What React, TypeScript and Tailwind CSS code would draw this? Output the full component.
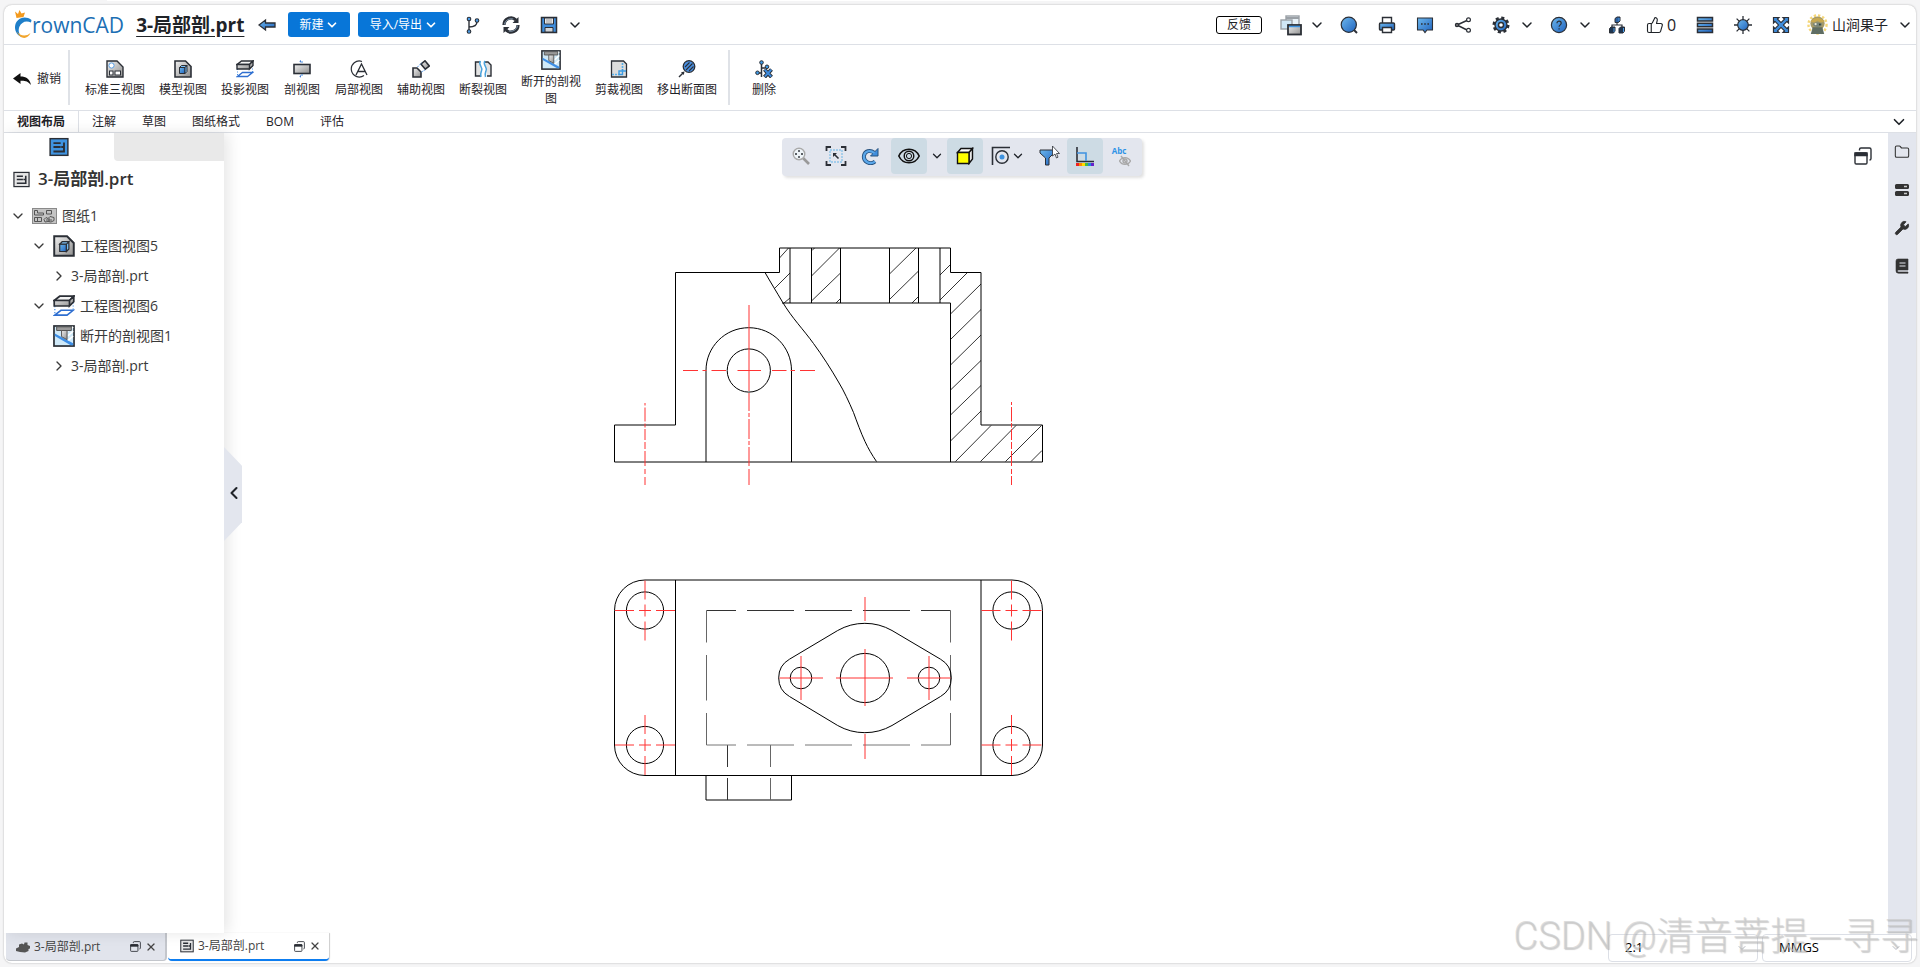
import React from "react";
import { ChevronDown, ChevronLeft, ChevronRight, X, ThumbsUp, Folder, Wrench } from "lucide-react";

const INK = "#2b2f36";
const BLUE = "url(#blueFill)";
const GREY = "url(#greyFill)";

function Icon({ children, className = "size-[18px]", box = 18 }: { children: React.ReactNode; className?: string; box?: number }) {
  return (
    <svg viewBox={`0 0 ${box} ${box}`} className={`${className} shrink-0`} fill="none" stroke={INK} strokeWidth="1.4" aria-hidden="true">
      {children}
    </svg>
  );
}

function Gradients() {
  return (
    <svg className="absolute size-0" aria-hidden="true">
      <defs>
        <linearGradient id="blueFill" x1="0" y1="0" x2="1" y2="1">
          <stop offset="0" stopColor="#6db8ee" />
          <stop offset="1" stopColor="#1f62bd" />
        </linearGradient>
        <linearGradient id="greyFill" x1="0" y1="0" x2="1" y2="1">
          <stop offset="0" stopColor="#f0f0f0" />
          <stop offset="1" stopColor="#8f8f8f" />
        </linearGradient>
      </defs>
    </svg>
  );
}

/* ---------- icons ---------- */

const StandardViewsIcon = () => (
  <Icon>
    <path d="M1 1h10l6 6v10H1z" fill={GREY} />
    <circle cx="5.5" cy="5.5" r="2.6" fill="#fff" stroke="#5aa0e6" strokeWidth="1" />
    <rect x="3.5" y="11" width="3.5" height="4" fill="#fff" strokeWidth="1" />
    <rect x="9" y="11" width="5.5" height="4" fill="#fff" strokeWidth="1" />
  </Icon>
);
const ModelViewIcon = ({ className }: { className?: string }) => (
  <Icon className={className}>
    <path d="M1 1h10.5L17 6.500V17H1z" fill={GREY} strokeWidth="1.6" />
    <path d="M5.500 7.500h5.500v6H5.500z" fill={BLUE} strokeWidth="1" />
    <path d="M5.500 7.500 7.500 5.500h5.500l-2 2zM11 13.500l2-2v-6l-2 2z" fill="#7cc0f5" strokeWidth="1" />
  </Icon>
);
const ProjectionIcon = ({ className }: { className?: string }) => (
  <Icon className={className}>
    <path d="M1.500 16.500h10l5-4h-10z" fill="#fff" stroke="#2f6fd0" strokeWidth="1.300" />
    <path d="M1.500 9v6M16.500 6v6" stroke="#4a90e2" strokeWidth="1" strokeDasharray="1 1.500" />
    <path d="M1 4.500 5.500 1H17l-3.500 3.500z" fill="#f4f4f4" strokeWidth="1.400" />
    <path d="M1 4.500h12.500V9H1zM13.500 4.500 17 1v4.500L13.500 9z" fill={GREY} strokeWidth="1.400" />
  </Icon>
);
const SectionIcon = () => (
  <Icon>
    <rect x="1" y="4.500" width="16" height="9" fill={GREY} strokeWidth="1.600" />
    <path d="M9 1v3M9 14v3" stroke="#4a90e2" strokeWidth="1" strokeDasharray="2 1" />
    <path d="M7 1.500h-1l2-1.500v3zM7 16.500h-1l2-1.500v3z" fill="#2f6fd0" stroke="none" />
  </Icon>
);
const DetailIcon = () => (
  <Icon>
    <path d="M12 1.500A8 8 0 1 0 14 15.500" strokeWidth="1.200" />
    <path d="M6 15 11.500 4 17 15M8 11.500h7" strokeWidth="1.300" />
  </Icon>
);
const AuxiliaryIcon = () => (
  <Icon>
    <path d="M1 8h4l4 4v5H1z" fill={GREY} strokeWidth="1.600" />
    <path d="m9 4 4-3.200L17.300 6l-4 3.200z" fill={GREY} strokeWidth="1.600" />
    <path d="m5.500 7 4-4M9.500 12l4-2.500" stroke="#4a90e2" strokeWidth="1" strokeDasharray="1.500 1" />
  </Icon>
);
const BrokenIcon = () => (
  <Icon>
    <path d="M6 2H1.500v14H7M11 2h3l3 3v11h-4" fill="#e3e3e3" />
    <path d="M6.500 1c-3 4 3 6 1 10-.8 2-1.500 3-.5 6M11 1c-3 4 3 6 1 10-.8 2-1.500 3-.5 6" stroke="#4ba3dc" strokeWidth="1.500" />
  </Icon>
);
const BreakoutIcon = ({ className }: { className?: string }) => (
  <Icon className={className}>
    <rect x=".8" y=".8" width="16.400" height="16.400" fill="#cfe9f8" strokeWidth="1.400" />
    <path d="M12 5l4.500-3.500M12 9l4.500-4M12 13l4.500-4" stroke="#fff" strokeWidth="1.200" />
    <path d="M1.500 7 16.500 15v1.500h-2L1.500 9z" fill="#3d8ee6" stroke="none" />
    <path d="M3 1.500h12v3H3z" fill="#9a9a9a" stroke="#555" strokeWidth=".8" />
    <path d="M7 4.500h4.500v7.500L7 9.500z" fill={GREY} stroke="#555" strokeWidth=".8" />
  </Icon>
);
const CropIcon = () => (
  <Icon>
    <path d="M1.500 1h12L16.500 4v13h-15z" fill="#dcdcdc" strokeWidth="1.300" />
    <path d="M12.500 3v8M2 14.500h8" stroke="#58aee8" strokeWidth="1.600" strokeDasharray="2 1" />
    <path d="M12.500 9v5.500H9V11h7" stroke="#3d9be0" strokeWidth="1.400" />
  </Icon>
);
const RemovedSectionIcon = () => (
  <Icon>
    <circle cx="11" cy="6.500" r="5.800" fill="#4a90e2" strokeWidth="1.300" />
    <path d="m7 7 4.500-4.500M8 10l6.500-6.500M11 11l4.500-4.500" strokeWidth="1.100" />
    <path d="m1 17 4-4" />
    <path d="M6.500 11.500 5.800 15 3 12.200z" fill={INK} stroke="none" />
  </Icon>
);
const DeleteIcon = () => (
  <Icon>
    <path d="M6.500 3v14M6.500 8h4M3 13h3.500" strokeWidth="1.500" />
    <circle cx="6.500" cy="2.500" r="1.800" fill="#3f9be6" strokeWidth="1" />
    <circle cx="12" cy="6.800" r="1.800" fill="#3f9be6" strokeWidth="1" />
    <circle cx="2.500" cy="12.800" r="1.800" fill="#3f9be6" strokeWidth="1" />
    <path d="m9.500 9.500 7 7.500M16.500 9.500l-7 7.500" strokeWidth="4" />
    <path d="m9.800 9.800 6.400 6.800M16.200 9.800l-6.400 6.800" stroke="#3f8bdc" strokeWidth="2" />
  </Icon>
);
const UndoArrow = () => (
  <Icon>
    <path d="M0 8.500 7.500 3v3.500C13 6.500 17 9 18 15c-3-4-6-4.500-10.500-4.300V14z" fill="#111" stroke="none" />
  </Icon>
);
const SheetDetailIcon = ({ blue = false, className }: { blue?: boolean; className?: string }) => (
  <Icon className={className}>
    <rect x="1" y="1.500" width="16" height="15" fill={blue ? "#3f93e0" : "#e6e6e6"} strokeWidth="1.300" />
    <path d="M4 5.500h6.500M4 9h6.500M4 13h9.500V5M11 9h2.500" strokeWidth="1.700" />
  </Icon>
);
const RestoreIcon = ({ className = "size-[18px]" }: { className?: string }) => (
  <Icon className={className}>
    <path d="M5.500 3.500V2.500A1.500 1.500 0 0 1 7 1h8.500A1.500 1.500 0 0 1 17 2.500v9a1.500 1.500 0 0 1-1.500 1.500" />
    <rect x="1" y="6" width="12" height="11" rx="1.200" />
    <path d="M1 6h12v2.500H1z" fill={INK} />
  </Icon>
);

/* ---------- header ---------- */

function Logo() {
  return (
    <a href="#home" className="flex h-[30px] items-end" aria-label="CrownCAD">
      <svg viewBox="0 0 18 30" className="h-[30px] w-[18px]" aria-hidden="true">
        <path d="M1 1.500 4 4 5.500 0 7.500 3.500 11 2.500 9.500 7 2.500 8z" fill="#f39a1e" />
        <path d="M17.500 10C10 4.500 1.500 9 1 17c-.2 5 3 9 7 10.200C4.500 24 4 20 5.500 16.500c1.800-4.300 6.500-6.600 11.500-4z" fill="#1f7fc9" />
        <path d="M3 21.500c3 4.500 9 5.500 13.500 1.500-2.500 6.500-10.500 7-13.500-1.500z" fill="#f2a52c" />
      </svg>
      <span className="font-['Open_Sans'] text-[21px] leading-[30px] text-[#1c6fb4]">rownCAD</span>
    </a>
  );
}

function HeaderButton({ label, children }: { label: string; children: React.ReactNode }) {
  return (
    <button type="button" aria-label={label} className="flex h-8 w-[38px] items-center justify-center">
      {children}
    </button>
  );
}

function MoreButton({ label }: { label: string }) {
  return (
    <button type="button" aria-label={label} className="flex h-8 w-5 items-center justify-center pr-1.5">
      <ChevronDown className="size-4 shrink-0" strokeWidth={2.2} />
    </button>
  );
}

function Header() {
  return (
    <header className="flex h-10 items-center border-b border-[#dde0e6] pl-2.5">
      <Logo />
      <h1 className="ml-3 text-[19px] leading-7 font-bold whitespace-nowrap underline underline-offset-4">3-局部剖.prt</h1>
      <button type="button" aria-label="返回" className="ml-3.5">
        <Icon>
          <path d="M1 9 7.500 4v3H17v4H7.500v3z" fill={BLUE} strokeWidth="1.300" />
        </Icon>
      </button>
      <button type="button" className="ml-3 flex h-[25px] w-[62px] items-center justify-center gap-0.5 rounded-[3px] bg-[#0876d8] text-xs text-white">
        新建 <ChevronDown className="size-[14px]" strokeWidth={3} />
      </button>
      <button type="button" className="ml-2 flex h-[25px] w-[91px] items-center justify-center gap-0.5 rounded-[3px] bg-[#0876d8] text-xs text-white">
        导入/导出 <ChevronDown className="size-[14px]" strokeWidth={3} />
      </button>
      <div className="ml-[5px] flex">
        <HeaderButton label="分支">
          <Icon>
            <path d="M5 4v11M5 11c5 0 8-1 8-5.500" />
            <circle cx="5" cy="3" r="1.800" fill="#4a9be6" strokeWidth="1.100" />
            <circle cx="5" cy="15.500" r="1.800" fill="#4a9be6" strokeWidth="1.100" />
            <circle cx="13" cy="4.500" r="1.800" fill="#4a9be6" strokeWidth="1.100" />
          </Icon>
        </HeaderButton>
        <HeaderButton label="同步">
          <Icon>
            <path d="M2 9a7 7 0 0 1 12-5M16 9a7 7 0 0 1-12 5" strokeWidth="3.200" />
            <path d="M16.500 1v6h-6zM1.500 17v-6h6z" fill={INK} stroke="none" />
            <path d="M2.300 8.500a7 7 0 0 1 9-5.500M15.700 9.500a7 7 0 0 1-9 5.500" stroke="#7f93a8" strokeWidth="1" />
          </Icon>
        </HeaderButton>
        <HeaderButton label="保存">
          <Icon>
            <path d="M1.500 1.500h15v15h-15z" fill="#3f8ddc" strokeWidth="1.500" />
            <path d="M4.500 2h9v6h-9z" fill="#e8eaed" strokeWidth="1" />
            <path d="M5 11.500h8V16H5z" fill="#cfd3d8" strokeWidth="1" />
            <path d="M6 4h6M6 6h6" strokeWidth=".8" stroke="#888" />
          </Icon>
        </HeaderButton>
        <MoreButton label="保存选项" />
      </div>

      <div className="ml-auto flex items-center pr-[3px]">
        <button type="button" className="mr-2.5 h-[18px] w-[46px] rounded-[3px] border border-black text-xs leading-4">
          反馈
        </button>
        <HeaderButton label="窗口">
          <Icon className="size-[22px]" box={22}>
            <rect x="6" y="2" width="13" height="10" fill="#e9f2f8" stroke="#9aa0a6" />
            <path d="M6 4h13" stroke="#9aa0a6" strokeWidth="2" />
            <rect x="1" y="6" width="11" height="9" fill="#cfe6f5" stroke="#9aa0a6" />
            <rect x="8" y="11" width="13" height="9.500" fill={GREY} strokeWidth="1.800" />
            <path d="M9 12.500h11" stroke="#3f93e0" strokeWidth="1.500" />
          </Icon>
        </HeaderButton>
        <MoreButton label="窗口选项" />
        <HeaderButton label="搜索">
          <Icon>
            <path d="m13.500 13.500 3.500 3.500" strokeWidth="2" />
            <circle cx="8.800" cy="8.800" r="7.600" fill={BLUE} strokeWidth="1.200" />
          </Icon>
        </HeaderButton>
        <HeaderButton label="打印">
          <Icon>
            <path d="M4.500 7V1.500h9V7" fill="#fff" />
            <rect x="1.500" y="7" width="15" height="7" rx="1" fill={BLUE} />
            <path d="M4.500 11.500h9v5h-9z" fill="#fff" />
          </Icon>
        </HeaderButton>
        <HeaderButton label="消息">
          <Icon>
            <path d="M1.500 2h15v12H11l-2 2.500L7 14H1.500z" fill={BLUE} strokeWidth="1.100" />
            <path d="M5 8h1.600M8.200 8h1.600M11.400 8H13" strokeWidth="1.600" />
          </Icon>
        </HeaderButton>
        <HeaderButton label="分享">
          <Icon>
            <path d="m3 9 11-5M3 9l11 5.500" />
            <circle cx="3" cy="9" r="1.600" fill="#777" strokeWidth="1.200" />
            <circle cx="14.500" cy="3.700" r="1.900" fill="#fff" strokeWidth="1.200" />
            <circle cx="14.500" cy="14.300" r="1.900" fill="#fff" strokeWidth="1.200" />
          </Icon>
        </HeaderButton>
        <HeaderButton label="设置">
          <Icon>
            <circle cx="9" cy="9" r="7" strokeWidth="3" strokeDasharray="3 2.500" />
            <circle cx="9" cy="9" r="6" fill={BLUE} />
            <circle cx="9" cy="9" r="2.500" fill="#fff" />
          </Icon>
        </HeaderButton>
        <MoreButton label="设置选项" />
        <HeaderButton label="帮助">
          <Icon>
            <circle cx="9" cy="9" r="7.600" fill={BLUE} strokeWidth="1.200" />
            <path d="M7 7.200c0-2.800 4.200-2.600 4.200 0 0 1.600-2.100 1.700-2.100 3.600M9.100 12.300v1.300" strokeWidth="1.200" />
          </Icon>
        </HeaderButton>
        <MoreButton label="帮助选项" />
        <HeaderButton label="组织">
          <Icon>
            <path d="M9 5v4M4 12V9h10v3" strokeWidth="1.200" />
            <path d="M7 2.500 9 1h3v4l-1.500 1.500H7z" fill="#2a5f9e" strokeWidth="1" />
            <path d="M1.500 12.500 3 11h4v4l-1.500 2h-4zM11 12.500l1.500-1.500h4v4L15 17h-4z" fill="#1e3550" strokeWidth="1" />
            <path d="M6 12v4M15.500 12v4M11 2v3" stroke="#4a9be6" strokeWidth="1" />
          </Icon>
        </HeaderButton>
        <button type="button" className="flex h-8 w-[50px] items-center gap-[3px] pl-2.5 text-base">
          <ThumbsUp className="size-[18px] shrink-0" strokeWidth={1.5} aria-label="点赞" />0
        </button>
        <HeaderButton label="列表">
          <Icon>
            <path d="M1.500 1.500h15V5h-15zM1.500 7.300h15v3.500h-15zM1.500 13h15v3.500h-15z" fill={BLUE} strokeWidth="1.500" />
          </Icon>
        </HeaderButton>
        <HeaderButton label="主题">
          <Icon>
            <path d="M9 0v18M0 9h18M2.600 2.600l12.800 12.800M15.400 2.600 2.600 15.400" strokeWidth="1.300" />
            <circle cx="9" cy="9" r="5.300" fill={BLUE} strokeWidth="1.200" />
          </Icon>
        </HeaderButton>
        <HeaderButton label="全屏">
          <Icon>
            <path d="m3 3 12 12M15 3 3 15" strokeWidth="4.500" />
            <path d="M1.500 1.500H7L1.500 7zM16.500 1.500H11l5.500 5.500zM1.500 16.500H7L1.500 11zM16.500 16.500H11l5.500-5.500z" fill="#3f8ddc" strokeWidth="1.200" />
            <path d="m3.500 3.500 11 11M14.500 3.500l-11 11" stroke="#3f8ddc" strokeWidth="2.400" />
          </Icon>
        </HeaderButton>
        <button type="button" className="ml-[7px] flex items-center gap-1 text-sm whitespace-nowrap">
          <svg viewBox="0 0 22 22" className="size-[21px]" aria-hidden="true">
            <circle cx="11" cy="11" r="9.500" fill="none" stroke="#f5d77a" strokeWidth="2.500" strokeDasharray="2.500 2" />
            <circle cx="11" cy="10" r="7.500" fill="#a59a68" />
            <path d="M6 14h10l2 7H4z" fill="#5f6d63" />
            <path d="M4 8c2-5 12-5 14 0l-4 1-3-2-3 2z" fill="#c9a94f" />
            <path d="M6 10.500c2-2 8-2 10 0-1 4-9 4-10 0z" fill="#77847a" />
            <circle cx="9" cy="10.500" r="1.200" fill="#e9e6d4" />
            <circle cx="13.500" cy="11" r="1" fill="#33402f" />
          </svg>
          山涧果子
          <ChevronDown className="ml-[5px] size-4" strokeWidth={2.2} />
        </button>
      </div>
    </header>
  );
}

/* ---------- ribbon ---------- */

const ribbonTools: { label: string; icon: React.ReactNode }[] = [
  { label: "标准三视图", icon: <StandardViewsIcon /> },
  { label: "模型视图", icon: <ModelViewIcon /> },
  { label: "投影视图", icon: <ProjectionIcon /> },
  { label: "剖视图", icon: <SectionIcon /> },
  { label: "局部视图", icon: <DetailIcon /> },
  { label: "辅助视图", icon: <AuxiliaryIcon /> },
  { label: "断裂视图", icon: <BrokenIcon /> },
  { label: "断开的剖视图", icon: <BreakoutIcon className="size-5" /> },
  { label: "剪裁视图", icon: <CropIcon /> },
  { label: "移出断面图", icon: <RemovedSectionIcon /> },
];

function RibbonButton({ label, icon }: { label: string; icon: React.ReactNode }) {
  return (
    <button
      type="button"
      className="flex max-w-[74px] min-w-[52px] flex-col items-center justify-center gap-[3px] px-[7px] pt-0.5 text-xs leading-[17px]"
    >
      {icon}
      <span>{label}</span>
    </button>
  );
}

function Ribbon() {
  return (
    <div className="flex h-[66px] border-b border-[#dde0e6] py-[5px]">
      <button type="button" className="flex items-center gap-1.5 border-r-2 border-[#dfe2e7] pt-0.5 pr-[7px] pl-[9px] text-xs">
        <UndoArrow />
        撤销
      </button>
      <div className="flex border-r-2 border-[#dfe2e7] pr-1 pl-2">
        {ribbonTools.map((t) => (
          <RibbonButton key={t.label} label={t.label} icon={t.icon} />
        ))}
      </div>
      <div className="flex pl-2">
        <RibbonButton label="删除" icon={<DeleteIcon />} />
      </div>
    </div>
  );
}

const ribbonTabs = ["注解", "草图", "图纸格式", "BOM", "评估"];

function RibbonTabs() {
  return (
    <nav className="flex h-[22px] items-center border-b border-[#dde0e6] text-xs">
      <button type="button" className="h-full border-r border-[#dde0e6] px-[13px] font-bold">
        视图布局
      </button>
      {ribbonTabs.map((t) => (
        <button type="button" key={t} className="h-full px-[13px]">
          {t}
        </button>
      ))}
      <button type="button" aria-label="折叠工具栏" className="mr-2 ml-auto">
        <ChevronDown className="size-[18px]" strokeWidth={2.2} />
      </button>
    </nav>
  );
}

/* ---------- feature tree ---------- */

function TreeRow({ indent, open, icon, label }: { indent: string; open?: boolean; icon?: React.ReactNode; label: string }) {
  return (
    <li className={`flex h-[30px] items-center ${indent}`}>
      {open === true && <ChevronDown className="mr-1.5 size-4" strokeWidth={2} />}
      {open === false && <ChevronRight className="mr-1 size-4" strokeWidth={2} />}
      {icon && <span className="mr-[5px]">{icon}</span>}
      {label}
    </li>
  );
}

function SheetIcon() {
  return (
    <svg viewBox="0 0 25 16" className="h-4 w-[25px]" fill="none" stroke="#555" aria-hidden="true">
      <rect x=".5" y=".5" width="24" height="15" fill="#c4c4c4" stroke="#8a8a8a" />
      <path d="M2.500 2.500h3v2.500h6v2h-9zM14.500 2.500h5V6h-5zM2.500 9.500h7v4h-7zM5.500 9.500v4M12 11.500l2-2 2 1 2-2 4 1v3l-3 1.500-3-.5-3 .5z" />
      <path d="M14 12h6M17 10v4" />
    </svg>
  );
}

function FeaturePanel() {
  return (
    <aside className="relative z-10 w-[220px] shrink-0 bg-white shadow-[4px_0_14px_rgba(0,0,0,0.1)]">
      <div className="flex h-7">
        <button type="button" aria-label="图纸树" className="flex w-[110px] items-start justify-center pt-1">
          <SheetDetailIcon blue className="size-5" />
        </button>
        <div className="h-7 flex-1 rounded-bl-sm bg-[#e9e9e9]" />
      </div>
      <h2 className="mb-1 flex h-9 items-center gap-2 pl-[9px] text-[17px] font-semibold text-[#333]">
        <SheetDetailIcon className="size-[17px]" />
        3-局部剖.prt
      </h2>
      <ul className="text-sm text-[#3a3a3a]">
        <TreeRow indent="pl-1.5" open icon={<SheetIcon />} label="图纸1" />
        <TreeRow indent="pl-[27px]" open icon={<ModelViewIcon className="size-[22px]" />} label="工程图视图5" />
        <TreeRow indent="pl-[47px]" open={false} label="3-局部剖.prt" />
        <TreeRow indent="pl-[27px]" open icon={<ProjectionIcon className="size-[22px]" />} label="工程图视图6" />
        <TreeRow indent="pl-[49px]" icon={<BreakoutIcon className="size-[22px]" />} label="断开的剖视图1" />
        <TreeRow indent="pl-[47px]" open={false} label="3-局部剖.prt" />
      </ul>
      <button
        type="button"
        aria-label="收起面板"
        className="absolute top-[314px] left-full flex h-[94px] w-[18px] items-center bg-[#e3e6ee] pr-0.5 pb-0.5 [clip-path:polygon(0_0,100%_20%,100%_80%,0_100%)]"
      >
        <ChevronLeft className="size-5 shrink-0" strokeWidth={2.5} />
      </button>
    </aside>
  );
}

/* ---------- drawing ---------- */

const hatches =
  "779.5 258 788.500 248M774.500 288.500 790 273M784 303 790 298M812 250.500 814.500 248M811.500 276 839.500 248M811.500 301 840.500 273M836 303 840.500 298.500M889.500 274 916 248M889.500 299.500 918.500 271M912 303 918.500 296.500M940 275 950.500 264.500M940 300 967.500 272.500M950.500 314 981 284M950.500 339.500 981 309.500M950.500 365 981 335M950.500 390 981 360.500M950.500 415 981 385.500M950.500 441 981 411M955.500 461.500 991 425.500M980.500 461.500 1016 425.500M1005.500 461.500 1041.500 425.500M1031 461.500 1042 450.500";

const cornerHoles: [number, number][] = [
  [645, 610.5],
  [1011.5, 610.5],
  [645, 745],
  [1011.5, 745],
];

function Drawing() {
  return (
    <svg className="size-full" fill="none" stroke="#000" strokeWidth="1" role="img" aria-label="局部剖视图">
      <g transform="translate(-224 -133)">
        {/* front view */}
        <path d="M614.500 462V425H675.500V272.500H779.500V248H950.500V272.500H981V425H1042.500V462z" />
        <path d="M782 303H950.500V462M790 248V303M811.500 248V303M840.500 248V303M889.500 248V303M918.500 248V303M940 248V303" />
        <path d="M765 272.500C771 283 776 291 782.500 302C792 318 803 329 813.500 343.500C822 355 831 369 838.500 382C844 391 849 402 853.500 412.500C857 422 861 433 865 441.500C868 448 872 455 876.500 461.500" />
        <path d="M706 462V370.500C706 347 725 327.700 748.800 327.700S791.500 347 791.500 370.500V462" />
        <circle cx="748.8" cy="370.5" r="21.6" />
        <path d={`M${hatches}`} strokeWidth=".8" />
        <g stroke="#f33">
          <path d="M749 305V391M749 393V411M749 413V417M749 419V439M749 441V445M749 447V466M749 469V485" />
          <path d="M683 370.500H698M702.500 370.500H706.500M711.500 370.500H726M737.500 370.500H761M772 370.500H786.500M790.500 370.500H795M800 370.500H815" />
          <path d="M645 403V405.500M645 407.500V421.500M645 423.500V427.500M645 429V440M645 442V449M645 451V466M645 469V474M645 477V485" />
          <path d="M1011.500 402V405M1011.500 407V421.500M1011.500 423V427.500M1011.500 429V440M1011.500 442V449M1011.500 451V466M1011.500 469V474M1011.500 476V485" />
        </g>

        {/* top view */}
        <path d="M645 580H1012A30.500 30.500 0 0 1 1042.500 610.500V745A30.500 30.500 0 0 1 1012 775.500H645A30.500 30.500 0 0 1 614.500 745V610.500A30.500 30.500 0 0 1 645 580zM675.500 580V775.500M981 580V775.500" />
        <path d="M706 775.500V800H791.500V775.500" />
        <path
          stroke="#333"
          d="M706.500 610.500H736M747 610.500H794M805 610.500H852M863 610.500H910M921 610.500H950.500M727.500 745V767M727.500 778V800"
        />
        <path
          stroke="#666"
          d="M706.500 610.500V642.500M706.500 655V700.500M706.500 713V745M950.500 610.500V642.500M950.500 655V700.500M950.500 713V745M770.500 745V767M770.500 778V800"
        />
        <path stroke="#777" d="M706.500 745H736M747 745H794M805 745H852M863 745H910M921 745H950.500" />
        <path d="M837.700 630.500A55 55 0 0 1 892 630.500L940.500 659.200A21.500 21.500 0 0 1 940.500 696.500L892 725.500A55 55 0 0 1 837.700 725.500L789.500 696.500A21.500 21.500 0 0 1 789.500 659.200z" />
        <circle cx="864.9" cy="678" r="24.6" />
        <circle cx="801" cy="678" r="10.8" />
        <circle cx="929" cy="678" r="10.8" />
        {cornerHoles.map(([x, y]) => (
          <g key={`${x}-${y}`}>
            <circle cx={x} cy={y} r="18.6" />
            <path
              stroke="#f33"
              d={`M${x - 30} ${y}h19M${x - 6} ${y}h12M${x + 11} ${y}h19M${x} ${y - 6}v12M${x} ${y - 30}v19M${x} ${y + 11}v19`}
            />
          </g>
        ))}
        <g stroke="#f33">
          <path d="M836 678H893M865 649V706M865 597V621M865 734V759" />
          <path d="M779.500 678H823M801 656V700M907 678H950.500M929 656V700" />
        </g>
      </g>
    </svg>
  );
}

function CanvasToolbar() {
  return (
    <div
      role="toolbar"
      aria-label="视图工具"
      className="absolute top-[5px] left-[558px] flex h-[38px] w-[360px] items-start rounded-sm bg-[#e3e6ee] pl-[7px] shadow-[2px_2px_3px_rgba(0,0,0,0.12)] [&>button]:flex [&>button]:h-9 [&>button]:w-9 [&>button]:shrink-0 [&>button]:items-center [&>button]:justify-center [&>button]:rounded-sm"
    >
      <button type="button" aria-label="缩放" className="max-w-[34px] pr-2.5">
        <Icon>
          <path d="m11 11 6 6" stroke="#999" strokeWidth="2.600" />
          <circle cx="7" cy="7" r="5.800" fill="#eef4f8" stroke="#aaa" />
          <path d="M7 3v2M7 9v2M3 7h2M9 7h2" />
        </Icon>
      </button>
      <button type="button" aria-label="框选缩放" className="max-w-[34px] pr-2">
        <Icon className="size-[22px]" box={22}>
          <path d="M1.500 6V2H6M16 2h4.500v4M1.500 16v4H6M16 20h4.500v-4" strokeWidth="1.800" />
          <rect x="5" y="5" width="12" height="12" stroke="#8ec5ea" strokeDasharray="2 1" />
          <path d="m9 9 4.500 4.500" strokeWidth="1.600" />
          <path d="M8 8h4l-4 4z" fill={INK} stroke="none" />
        </Icon>
      </button>
      <button type="button" aria-label="旋转" className="max-w-[34px] pr-2">
        <Icon>
          <path d="M14 14.500c-5 4-12 0-11-6C4 4 9 2.500 13 5.500" strokeWidth="4" stroke="#27527f" />
          <path d="M17 1.500V9H9.500z" fill="#3f8ddc" stroke="#27527f" strokeWidth="1" />
          <path d="M14 14.500c-5 4-12 0-11-6C4 4 9 2.500 13.500 6" strokeWidth="2.200" stroke="#5aa7ea" />
        </Icon>
      </button>
      <button type="button" aria-label="显示" className="bg-[#cddbe4]">
        <Icon className="size-[22px]" box={22}>
          <path d="M.8 11C5 2 17 2 21.200 11 17 20 5 20 .8 11z" stroke="#111" strokeWidth="1.600" />
          <circle cx="11" cy="11" r="4.800" stroke="#111" strokeWidth="1.400" />
          <circle cx="11" cy="11" r="2.600" stroke="#111" strokeWidth="1" />
        </Icon>
      </button>
      <button type="button" aria-label="显示选项" className="max-w-5">
        <ChevronDown className="size-[14px] shrink-0" strokeWidth={2.2} />
      </button>
      <button type="button" aria-label="着色" className="bg-[#cddbe4]">
        <Icon className="size-[18px]">
          <path d="M1.500 5.500 5 1.500h11.500L13 5.500z" fill="#fff" stroke="#111" />
          <path d="M13 5.500 16.500 1.500V12L13 16.500z" fill="#e8e8e8" stroke="#111" />
          <path d="M1.500 5.500H13v11H1.500z" fill="#ff0" stroke="#111" />
        </Icon>
      </button>
      <button type="button" aria-label="视图方向" className="ml-[7px]">
        <Icon className="size-5" box={20}>
          <path d="M1.500 19V1.500H19" strokeWidth="1.600" />
          <circle cx="11" cy="11" r="6.200" />
          <circle cx="11" cy="11" r="2.500" fill="#3f93e0" stroke="none" />
        </Icon>
        <ChevronDown className="size-[14px] shrink-0" strokeWidth={2.2} />
      </button>
      <button type="button" aria-label="过滤" className="ml-[5px]">
        <Icon className="size-[22px]" box={22}>
          <path d="M2 5h14v3l-5 5v7H7.500v-7L2 8z" fill={BLUE} strokeWidth="1" />
          <path d="M14.500 1v10l2.500-2 1.500 4 1.500-.8-1.500-3.700h3z" fill="#fff" strokeWidth=".8" />
        </Icon>
      </button>
      <button type="button" aria-label="坐标轴" className="bg-[#cddbe4]">
        <Icon className="size-5" box={20}>
          <path d="M2 1v14.500h17" strokeWidth="1.600" />
          <path d="M2 7h9v8" stroke="#3f93e0" strokeWidth="1.600" />
          <path d="M1 18.500h3" stroke="#e22" strokeWidth="3" />
          <path d="M4 18.500h3" stroke="#f80" strokeWidth="3" />
          <path d="M7 18.500h3" stroke="#fd0" strokeWidth="3" />
          <path d="M10 18.500h3" stroke="#4b4" strokeWidth="3" />
          <path d="M13 18.500h3" stroke="#28d" strokeWidth="3" />
          <path d="M16 18.500h3" stroke="#62c" strokeWidth="3" />
        </Icon>
      </button>
      <button type="button" aria-label="隐藏注释" className="flex-col">
        <span className="mr-1 text-[8px] leading-[9px] font-bold text-[#2f93e6]">Abc</span>
        <Icon className="ml-2 size-3" box={12}>
          <path d="M.5 6C3 1.500 9 1.500 11.500 6 9 10.500 3 10.500.5 6zM2 1l8 10" stroke="#a8a8a8" strokeWidth="1.400" />
          <circle cx="6" cy="6" r="2" stroke="#a8a8a8" />
        </Icon>
      </button>
    </div>
  );
}

/* ---------- side bar and footer ---------- */

function SideBar() {
  return (
    <aside className="flex w-7 shrink-0 flex-col items-center gap-[22px] bg-[#e3e6ee] pt-[11px] text-[#333]">
      <button type="button" aria-label="文件夹">
        <Folder className="size-4" strokeWidth={1.6} />
      </button>
      <button type="button" aria-label="属性">
        <Icon className="size-4" box={16}>
          <rect x="1" y="2" width="14" height="5" rx="1.500" fill="#333" stroke="none" />
          <rect x="1" y="9" width="14" height="5" rx="1.500" fill="#333" stroke="none" />
          <path d="M10 4.500h3M10 11.500h3" stroke="#ccc" />
        </Icon>
      </button>
      <button type="button" aria-label="工具">
        <Wrench className="size-4" fill="#333" strokeWidth={1.2} />
      </button>
      <button type="button" aria-label="资料库">
        <Icon className="size-4" box={16}>
          <path d="M4 1h10v11H4.500a1 1 0 0 0 0 2H14v1.200H4.500A2.500 2.500 0 0 1 2 12.500V3a2 2 0 0 1 2-2z" fill="#333" stroke="#333" strokeWidth=".6" />
          <path d="M5.500 5h6M5.500 8h6" stroke="#e3e6ee" strokeWidth="1.200" />
        </Icon>
      </button>
    </aside>
  );
}

function DocumentTab({ active = false, icon }: { active?: boolean; icon: React.ReactNode }) {
  return (
    <div
      className={`flex h-7 w-[161px] items-center rounded-b text-xs text-[#444] ${
        active ? "border-b-2 border-[#0d7df0] bg-white pl-3 shadow-[1px_0_1px_rgba(0,0,0,0.2)]" : "border-r-2 border-b border-[#c3c6cc] bg-[#e1e4ec] pl-2.5"
      }`}
    >
      <a href="#doc" className="flex items-center gap-1">
        {icon}
        3-局部剖.prt
      </a>
      <button type="button" aria-label="还原" className="ml-auto">
        <RestoreIcon className="size-[11px]" />
      </button>
      <button type="button" aria-label="关闭" className="mr-2 ml-1">
        <X className="size-3" strokeWidth={2.5} />
      </button>
    </div>
  );
}

function StatusSelect({ id, label, value }: { id: string; label: string; value: string }) {
  return (
    <div className="relative w-[150px]">
      <label htmlFor={id} className="sr-only">
        {label}
      </label>
      <select id={id} className="h-7 w-full appearance-none rounded border border-[#dcdfe6] bg-white pl-4 text-[13px] text-black">
        <option>{value}</option>
      </select>
      <ChevronDown className="pointer-events-none absolute top-2 right-2.5 size-3 text-[#b4b8c0]" />
    </div>
  );
}

function Footer() {
  return (
    <footer className="flex h-[30px] items-start gap-px pl-0.5">
      <DocumentTab
        icon={
          <Icon className="h-[14px] w-[14px]" box={14}>
            <path d="M0 8.500 3 7V4.500L6 3.500l2 1 .5-2h3V5L14 6v2.500l-1.500.5v2L9 12.500 4 12l-4-1z" fill="#555" stroke="none" />
          </Icon>
        }
      />
      <DocumentTab active icon={<SheetDetailIcon className="size-[14px]" />} />
      <div className="mr-1 ml-auto flex gap-1 pt-px">
        <StatusSelect id="scale" label="比例" value="2:1" />
        <StatusSelect id="units" label="单位" value="MMGS" />
      </div>
    </footer>
  );
}

export default function App() {
  return (
    <div className="relative h-screen bg-[#f5f5f6] px-1 pt-[5px] pb-1 font-['Open_Sans','Noto_Sans_CJK_SC',sans-serif] text-[#1f2328]">
      <Gradients />
      <div className="absolute top-0 right-[280px] left-[107px] h-px bg-white" />
      <div className="flex h-full flex-col overflow-hidden rounded-lg bg-white shadow-[0_0_2px_rgba(0,0,0,0.3)]">
        <Header />
        <Ribbon />
        <RibbonTabs />
        <div className="flex min-h-0 flex-1">
          <FeaturePanel />
          <main className="relative min-w-0 flex-1 overflow-hidden">
            <Drawing />
            <CanvasToolbar />
            <button type="button" aria-label="还原窗口" className="absolute top-[14px] right-4">
              <RestoreIcon className="size-[18px]" />
            </button>
          </main>
          <SideBar />
        </div>
        <Footer />
      </div>
      <div className="pointer-events-none absolute right-0.5 bottom-1 font-['Roboto','Noto_Sans_CJK_SC',sans-serif] text-[38px] leading-[54px] font-light whitespace-nowrap text-[#c8c8c8]/60 [text-shadow:1px_1px_1px_#8886]">
        CSDN @清音菩提<span className="font-['Noto_Sans_CJK_SC',sans-serif]">—</span>寻寻
      </div>
    </div>
  );
}
